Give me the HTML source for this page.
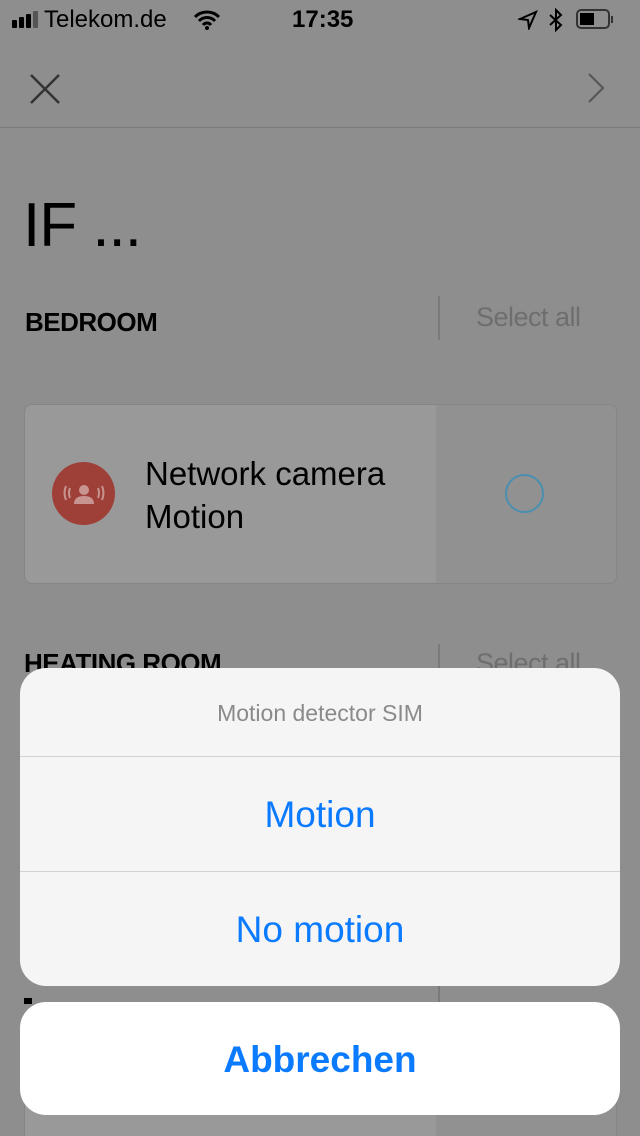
<!DOCTYPE html>
<html><head><meta charset="utf-8"><style>
html,body{margin:0;width:640px;height:1136px;overflow:hidden}
body{background:#8e8e8e;font-family:"Liberation Sans",sans-serif;position:relative}
.a{position:absolute}
</style></head><body>
<!-- status bar -->
<div class="a" style="left:12px;top:20px;width:5px;height:8px;background:#000;border-radius:1px"></div>
<div class="a" style="left:19px;top:17px;width:5px;height:11px;background:#000;border-radius:1px"></div>
<div class="a" style="left:26px;top:14px;width:5px;height:14px;background:#000;border-radius:1px"></div>
<div class="a" style="left:33px;top:11px;width:5px;height:17px;background:#555;border-radius:1px"></div>
<div class="a" style="left:44px;top:6px;font-size:24px;color:#000">Telekom.de</div>
<svg class="a" style="left:194px;top:10px" width="26" height="20" viewBox="0 0 26 20"><path d="M1 7a17 17 0 0 1 24 0M5 11a11 11 0 0 1 16 0M9 15a5 5 0 0 1 8 0" stroke="#000" stroke-width="3" fill="none"/><circle cx="13" cy="18" r="2" fill="#000"/></svg>
<div class="a" style="left:292px;top:6px;font-size:24px;font-weight:bold;color:#000">17:35</div>
<svg class="a" style="left:518px;top:10px" width="20" height="20" viewBox="0 0 20 20"><path d="M2 9L18 2L11 18L10 10Z" fill="none" stroke="#000" stroke-width="2"/></svg>
<svg class="a" style="left:548px;top:8px" width="16" height="24" viewBox="0 0 16 24"><path d="M2 7L13 17L8 22V2L13 7L2 17" stroke="#000" stroke-width="2" fill="none"/></svg>
<div class="a" style="left:576px;top:9px;width:34px;height:20px;border:2px solid #333;border-radius:5px;box-sizing:border-box"></div>
<div class="a" style="left:580px;top:13px;width:14px;height:12px;background:#000"></div>
<div class="a" style="left:611px;top:16px;width:2px;height:7px;background:#333"></div>
<!-- nav -->
<svg class="a" style="left:28px;top:72px" width="34" height="34"><path d="M3 3L31 31M31 3L3 31" stroke="#333" stroke-width="2.5"/></svg>
<svg class="a" style="left:586px;top:72px" width="20" height="32"><path d="M3 2L17 16L3 30" stroke="#555" stroke-width="2" fill="none"/></svg>
<div class="a" style="left:0;top:127px;width:640px;height:1px;background:#7a7a7a"></div>
<div class="a" style="left:23px;top:190px;font-size:62px;color:#000;letter-spacing:-1px">IF ...</div>
<div class="a" style="left:25px;top:307px;font-size:26px;font-weight:bold;color:#000;letter-spacing:-0.5px">BEDROOM</div>
<div class="a" style="left:438px;top:296px;width:2px;height:44px;background:#7a7a7a"></div>
<div class="a" style="left:476px;top:302px;font-size:27px;color:#6e6e6e;letter-spacing:-0.5px">Select all</div>
<!-- card -->
<div class="a" style="left:24px;top:404px;width:591px;height:178px;border:1px solid #858585;border-radius:8px;background:#999;overflow:hidden">
<div class="a" style="left:411px;top:0;width:180px;height:178px;background:#919191"></div>
</div>
<div class="a" style="left:52px;top:462px;width:63px;height:63px;border-radius:50%;background:#9e3f38"></div>
<svg class="a" style="left:52px;top:462px" width="63" height="63"><circle cx="32" cy="28" r="5" fill="#c89490"/><path d="M22 42q0-8 10-8q10 0 10 8z" fill="#c89490"/><path d="M14 24q-3 7 0 14M18 26q-2 5 0 10M50 24q3 7 0 14M46 26q2 5 0 10" stroke="#c89490" stroke-width="2" fill="none"/></svg>
<div class="a" style="left:145px;top:452px;font-size:33px;color:#000;line-height:43px">Network camera<br>Motion</div>
<div class="a" style="left:505px;top:474px;width:39px;height:39px;border:2px solid #4a8fb0;border-radius:50%;box-sizing:border-box"></div>
<div class="a" style="left:24px;top:648px;font-size:26px;font-weight:bold;color:#000;letter-spacing:-0.5px">HEATING ROOM</div>
<div class="a" style="left:438px;top:644px;width:2px;height:360px;background:#7a7a7a"></div>
<div class="a" style="left:476px;top:648px;font-size:27px;color:#6e6e6e;letter-spacing:-0.5px">Select all</div>
<div class="a" style="left:24px;top:998px;width:8px;height:6px;background:#000"></div>
<div class="a" style="left:24px;top:1040px;width:591px;height:96px;border:1px solid #858585;border-bottom:0;background:#999;overflow:hidden"><div class="a" style="left:411px;top:0;width:180px;height:96px;background:#919191"></div></div>
<!-- sheet -->
<div class="a" style="left:20px;top:668px;width:600px;height:318px;border-radius:26px;background:#f5f5f5;overflow:hidden">
<div class="a" style="left:0;top:0;width:600px;height:88px;text-align:center;line-height:90px;font-size:23px;color:#8a8a8a">Motion detector SIM</div>
<div class="a" style="left:0;top:88px;width:600px;height:1px;background:#d2d2d2"></div>
<div class="a" style="left:0;top:89px;width:600px;height:114px;text-align:center;line-height:116px;font-size:37px;color:#0a7aff">Motion</div>
<div class="a" style="left:0;top:203px;width:600px;height:1px;background:#d2d2d2"></div>
<div class="a" style="left:0;top:204px;width:600px;height:114px;text-align:center;line-height:116px;font-size:37px;color:#0a7aff">No motion</div>
</div>
<div class="a" style="left:20px;top:1002px;width:600px;height:113px;border-radius:26px;background:#fff;text-align:center;line-height:116px;font-size:37px;font-weight:bold;color:#0a7aff">Abbrechen</div>
</body></html>
